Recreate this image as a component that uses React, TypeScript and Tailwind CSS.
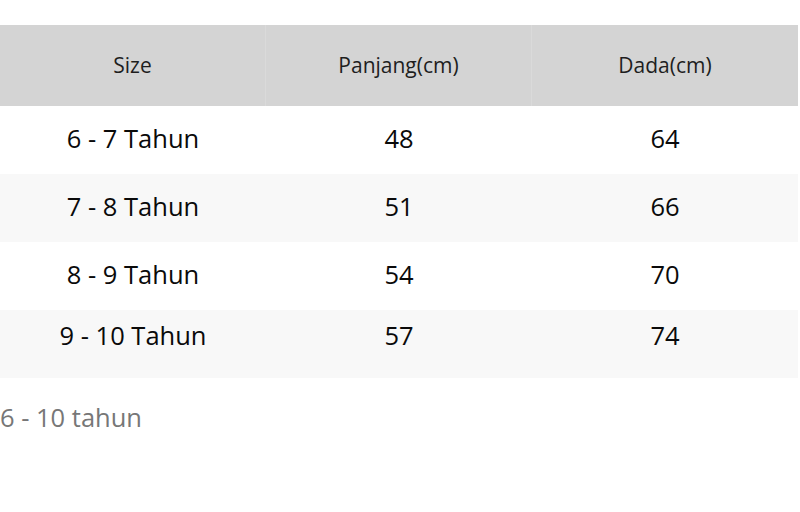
import React from 'react';

const rows = [
  { size: '6 - 7 Tahun', panjang: '48', dada: '64' },
  { size: '7 - 8 Tahun', panjang: '51', dada: '66' },
  { size: '8 - 9 Tahun', panjang: '54', dada: '70' },
  { size: '9 - 10 Tahun', panjang: '57', dada: '74' },
];

const App: React.FC = () => {
  return (
    <div className="w-[800px] h-[512px] bg-white pt-[25px]" style={{ fontFamily: '"Open Sans", "Noto Sans", sans-serif' }}>
      <div className="w-[798px]">
        {/* Header */}
        <div className="grid grid-cols-3 h-[81px] bg-[#d4d4d4] text-[21px] text-[#1e1e1e]">
          <div className="flex items-center justify-center border-r border-[#dadada]">Size</div>
          <div className="flex items-center justify-center border-r border-[#dadada]">Panjang(cm)</div>
          <div className="flex items-center justify-center">Dada(cm)</div>
        </div>

        {/* Body */}
        {rows.map((row, i) => {
          const last = i === rows.length - 1;
          return (
            <div
              key={row.size}
              className={`grid grid-cols-3 h-[68px] text-[25.5px] text-[#0a0a0a] ${i % 2 === 1 ? 'bg-[#f8f8f8]' : 'bg-white'} ${last ? 'pb-[17px]' : 'pb-[4px]'}`}
            >
              <div className="flex items-center justify-center">{row.size}</div>
              <div className="flex items-center justify-center">{row.panjang}</div>
              <div className="flex items-center justify-center">{row.dada}</div>
            </div>
          );
        })}
      </div>

      <div className="mt-[22px] text-[25.5px] leading-[35px] text-[#777]">6 - 10 tahun</div>
    </div>
  );
};

export default App;
